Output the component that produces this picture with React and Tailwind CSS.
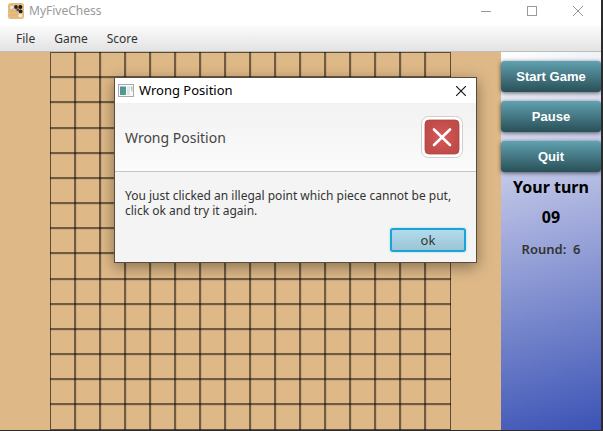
const COLS = 16;
const ROWS = 15;

function AppIcon() {
  return (
    <svg viewBox="0 0 16 16" className="size-4 shrink-0" aria-hidden="true">
      <rect width="16" height="16" rx="2.5" fill="#e9bd80" />
      <path d="M0 4h16M0 8h16M0 12h16M4 0v16M8 0v16M12 0v16" stroke="#d9ab6e" strokeWidth="0.5" />
      <circle cx="4" cy="4.5" r="1.7" fill="#f1eee8" />
      <circle cx="5.5" cy="6" r="1.4" fill="#c9c4ba" />
      <circle cx="8" cy="4" r="1.9" fill="#252525" />
      <circle cx="12.3" cy="4" r="2" fill="#171717" />
      <circle cx="9.8" cy="6.8" r="1.4" fill="#4c4740" />
      <circle cx="12.6" cy="8.4" r="1.9" fill="#222" />
      <circle cx="12.3" cy="12.4" r="1.9" fill="#eeebe6" />
    </svg>
  );
}

function WindowIcon() {
  return (
    <svg viewBox="0 0 16 14" className="h-[14px] w-4 shrink-0" aria-hidden="true">
      <defs>
        <linearGradient id="pane" x1="0" y1="0" x2="1" y2="1">
          <stop offset="0" stopColor="#5b87b0" />
          <stop offset="1" stopColor="#4aa678" />
        </linearGradient>
      </defs>
      <rect x="0.5" y="0.5" width="15" height="12" fill="#fafafa" stroke="#a9a9a9" />
      <rect x="2" y="2.500" width="6" height="8.500" fill="url(#pane)" />
      <rect x="9" y="2.500" width="3" height="8.500" fill="#dfe6e6" />
      <path d="M12.500 2.500h2v5h-1z" fill="#a9cbb9" />
    </svg>
  );
}

function Board() {
  const xs = Array.from({ length: COLS - 1 }, (_, i) => 25 * (i + 1));
  const ys = Array.from({ length: ROWS - 1 }, (_, i) => Math.round(25.17 * (i + 1)));
  return (
    <svg viewBox="0 0 401 378" className="h-[378px] w-[401px] shrink-0" shapeRendering="crispEdges" aria-label="Board" role="img">
      <rect x="0.5" y="0.5" width="400" height="377" fill="none" stroke="#5d4c37" />
      {xs.map((x) => (
        <g key={x}>
          <rect x={x - 1} y="0" width="2" height="378" fill="#000" fillOpacity="0.5" />
          <rect x={x + 1} y="0" width="1" height="378" fill="#000" fillOpacity="0.08" />
        </g>
      ))}
      {ys.map((y) => (
        <g key={y}>
          <rect x="0" y={y - 1} width="401" height="2" fill="#000" fillOpacity="0.5" />
          <rect x="0" y={y + 1} width="401" height="1" fill="#000" fillOpacity="0.08" />
        </g>
      ))}
    </svg>
  );
}

function SideButton({ children }) {
  return (
    <button className="h-[31px] w-full rounded-[3px] bg-linear-to-b from-[#61a2b1] to-[#2a5058] font-['Liberation_Sans',sans-serif] text-[13px] font-bold text-white shadow-[0_1px_4px_rgba(0,0,0,0.6)]">
      {children}
    </button>
  );
}

function WrongPositionDialog() {
  return (
    <section
      role="dialog"
      aria-label="Wrong Position"
      className="absolute top-[77px] left-[114px] w-[363px] border border-[#5b4c3a] bg-[#f4f4f4] shadow-[0_4px_14px_rgba(0,0,0,0.4)]"
    >
      <header className="flex h-[25px] items-center gap-[5px] bg-white pr-[5px] pl-[3px] text-[13px] text-black">
        <WindowIcon />
        <span className="flex-1">Wrong Position</span>
        <button aria-label="Close" className="flex size-5 items-center justify-center">
          <svg viewBox="0 0 10 10" className="size-[10px]" aria-hidden="true">
            <path d="M0 0l10 10M10 0L0 10" stroke="#111" strokeWidth="1.1" />
          </svg>
        </button>
      </header>
      <div className="flex h-[69px] items-center justify-between border-b border-[#c4c4c4] bg-linear-to-b from-[#f2f2f2] to-[#fbfbfb] pr-[13px] pl-[10px]">
        <h2 className="text-[14px] text-[#444]">Wrong Position</h2>
        <svg viewBox="0 0 42 42" className="size-[42px]" aria-hidden="true">
          <defs>
            <radialGradient id="red">
              <stop offset="0" stopColor="#d8595a" />
              <stop offset="1" stopColor="#be4c48" />
            </radialGradient>
          </defs>
          <rect x="0.5" y="0.5" width="41" height="41" rx="7" fill="#fff" stroke="#cfcfcf" />
          <rect x="4" y="4" width="34" height="34" rx="4" fill="url(#red)" stroke="#b5413d" strokeWidth="0.8" />
          <path d="M13 13.500l16 15.500M29 13.500L13 29" stroke="#fff" strokeWidth="2.600" strokeLinecap="round" />
        </svg>
      </div>
      <p className="px-[10px] pt-4 text-[12px] leading-[15px] text-[#333]">
        You just clicked an illegal point which piece cannot be put, click ok and try it again.
      </p>
      <div className="flex justify-end px-[10px] pt-[10px] pb-[10px]">
        <button className="h-6 w-[76px] rounded-[3px] border-2 border-[#1ba3d3] bg-linear-to-b from-[#b2dbed] to-[#9bc4d5] text-[13px] leading-5 text-[#333] shadow-[0_0_2px_#7fcdea]">
          ok
        </button>
      </div>
    </section>
  );
}

export default function App() {
  return (
    <div className="relative flex h-screen min-h-[431px] flex-col overflow-hidden border-r-2 border-b border-[#2d2a2b] bg-white font-['Noto_Sans',sans-serif]">
      <header className="flex h-[26px] shrink-0 items-center pr-[18px] pb-1 pl-2 text-[#999]">
        <AppIcon />
        <h1 className="flex-1 pl-[5px] text-[12px]">MyFiveChess</h1>
        <div className="flex items-center gap-9">
          <button aria-label="Minimize">
            <svg viewBox="0 0 10 10" className="size-[10px]" aria-hidden="true">
              <path d="M0 5.500h10" stroke="#999" />
            </svg>
          </button>
          <button aria-label="Maximize">
            <svg viewBox="0 0 10 10" className="size-[10px]" aria-hidden="true">
              <rect x="0.5" y="0.5" width="9" height="9" fill="none" stroke="#999" />
            </svg>
          </button>
          <button aria-label="Close window">
            <svg viewBox="0 0 10 10" className="size-[10px]" aria-hidden="true">
              <path d="M0 0l10 10M10 0L0 10" stroke="#999" />
            </svg>
          </button>
        </div>
      </header>
      <nav className="flex h-[26px] shrink-0 items-center gap-[19px] border-b border-[#bdbdbd] bg-linear-to-b from-[#fbfbfb] to-[#e3e3e3] pl-4 text-[12px] text-[#333]">
        <button>File</button>
        <button>Game</button>
        <button>Score</button>
      </nav>
      <div className="flex min-h-0 flex-1">
        <main className="flex flex-1 items-start justify-center bg-[#deb887]">
          <Board />
        </main>
        <aside className="flex w-[100px] shrink-0 flex-col items-center bg-linear-[165deg] from-white via-[#a5aedd] via-45% to-[#3b53b5] pt-[9px]">
          <div className="flex w-full flex-col gap-[9px]">
            <SideButton>Start Game</SideButton>
            <SideButton>Pause</SideButton>
            <SideButton>Quit</SideButton>
          </div>
          <p className="text-base leading-[30px] font-bold text-black">Your turn</p>
          <p className="text-base leading-[30px] font-bold text-black">09</p>
          <p className="text-[13px] leading-[34px] font-semibold text-[#333]">Round: &nbsp;6</p>
        </aside>
      </div>
      <WrongPositionDialog />
    </div>
  );
}
